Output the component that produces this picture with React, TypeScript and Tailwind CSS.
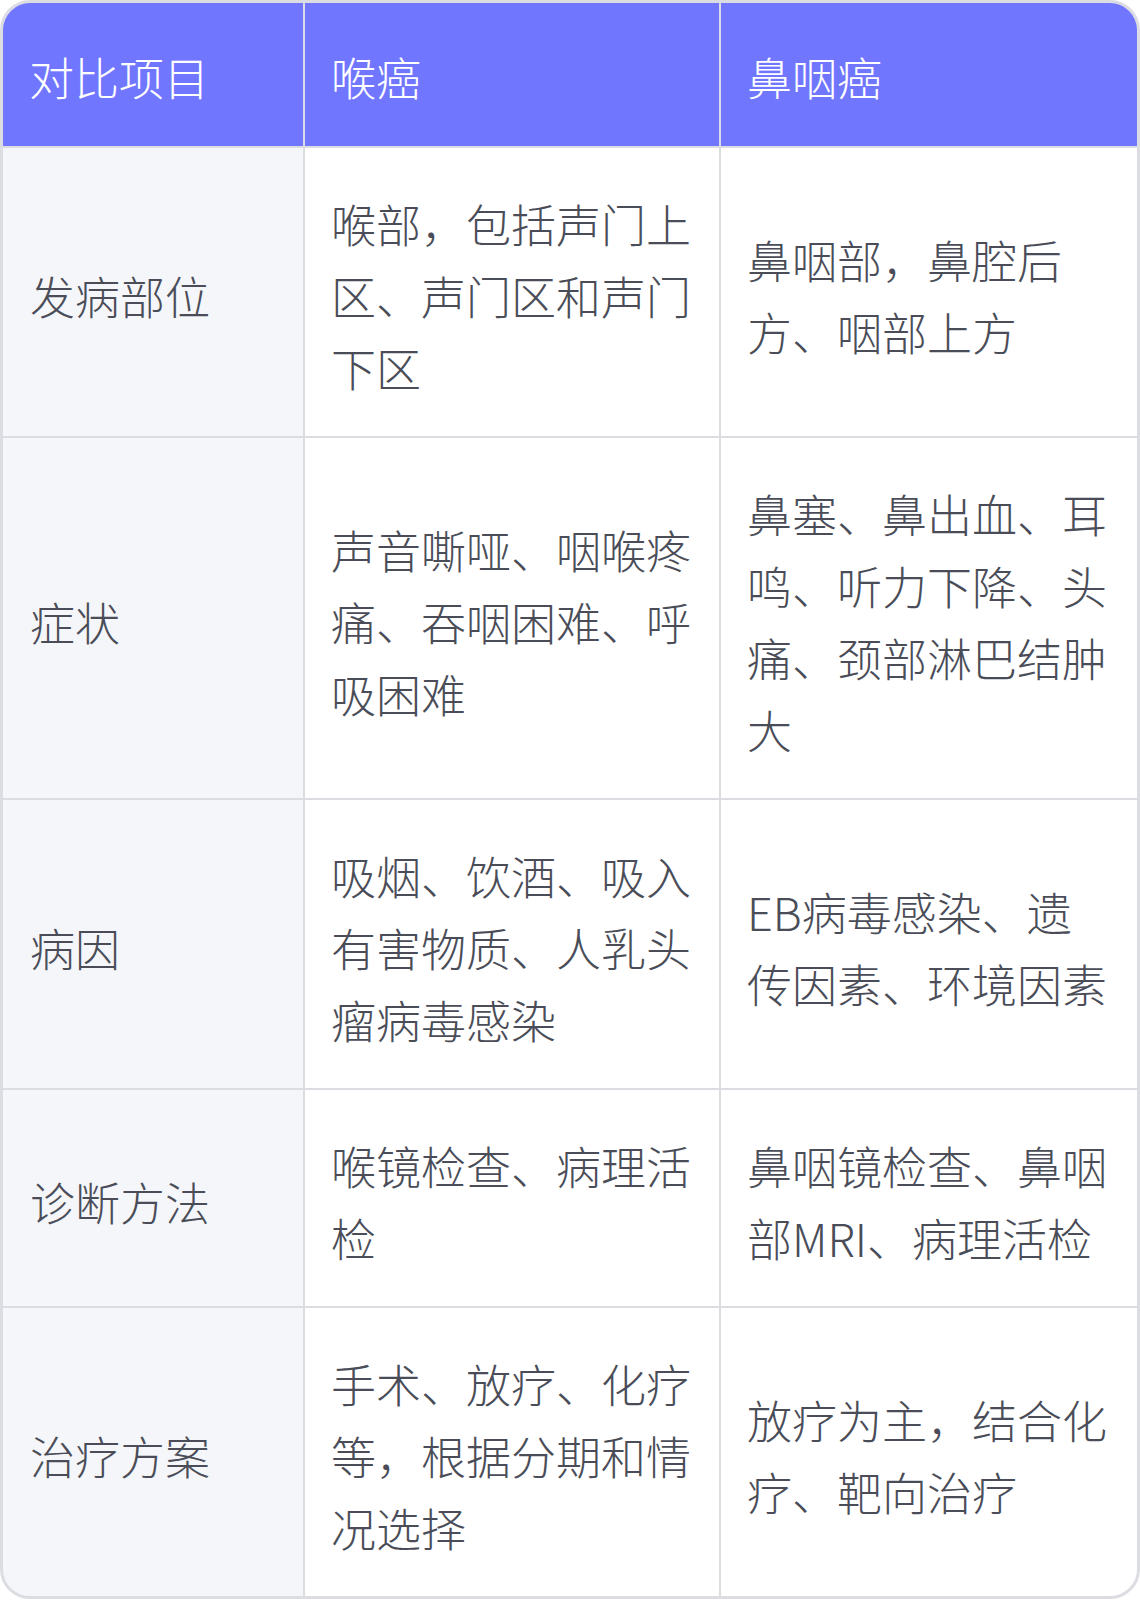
const rows = [
  {
    item: "发病部位",
    laryngeal: "喉部，包括声门上区、声门区和声门下区",
    nasopharyngeal: "鼻咽部，鼻腔后方、咽部上方",
  },
  {
    item: "症状",
    laryngeal: "声音嘶哑、咽喉疼痛、吞咽困难、呼吸困难",
    nasopharyngeal: "鼻塞、鼻出血、耳鸣、听力下降、头痛、颈部淋巴结肿大",
  },
  {
    item: "病因",
    laryngeal: "吸烟、饮酒、吸入有害物质、人乳头瘤病毒感染",
    nasopharyngeal: "EB病毒感染、遗传因素、环境因素",
  },
  {
    item: "诊断方法",
    laryngeal: "喉镜检查、病理活检",
    nasopharyngeal: "鼻咽镜检查、鼻咽部MRI、病理活检",
  },
  {
    item: "治疗方案",
    laryngeal: "手术、放疗、化疗等，根据分期和情况选择",
    nasopharyngeal: "放疗为主，结合化疗、靶向治疗",
  },
];

const headers = ["对比项目", "喉癌", "鼻咽癌"];

export default function App() {
  return (
    <div
      className="w-[1140px] bg-white"
      style={{ fontFamily: '"Noto Sans CJK SC", "Noto Sans", sans-serif' }}
    >
      <div className="border-[3px] border-[#dcdde3] rounded-[30px] overflow-hidden">
        <div className="grid grid-cols-[300px_414px_1fr] gap-[2px] bg-[#dcdde3]">
          {headers.map((h) => (
            <div
              key={h}
              className="flex items-center bg-[#7176ff] pl-[26px] pr-[28px] pt-[38px] pb-[33px] text-[45px] leading-[72px] font-light text-white"
            >
              {h}
            </div>
          ))}
          {rows.map((row) => (
            <div key={row.item} className="contents">
              <div className="flex items-center bg-[#f5f6fa] pl-[27px] pr-[27px] pt-[40px] pb-[32px] text-[45px] leading-[72px] font-light text-[#4a4d58]">
                {row.item}
              </div>
              <div className="flex items-center bg-white pl-[26px] pr-[28px] pt-[40px] pb-[32px] text-[45px] leading-[72px] font-light text-[#4a4d58]">
                {row.laryngeal}
              </div>
              <div className="flex items-center bg-white pl-[26px] pr-[28px] pt-[40px] pb-[32px] text-[45px] leading-[72px] font-light text-[#4a4d58]">
                {row.nasopharyngeal}
              </div>
            </div>
          ))}
        </div>
      </div>
    </div>
  );
}
